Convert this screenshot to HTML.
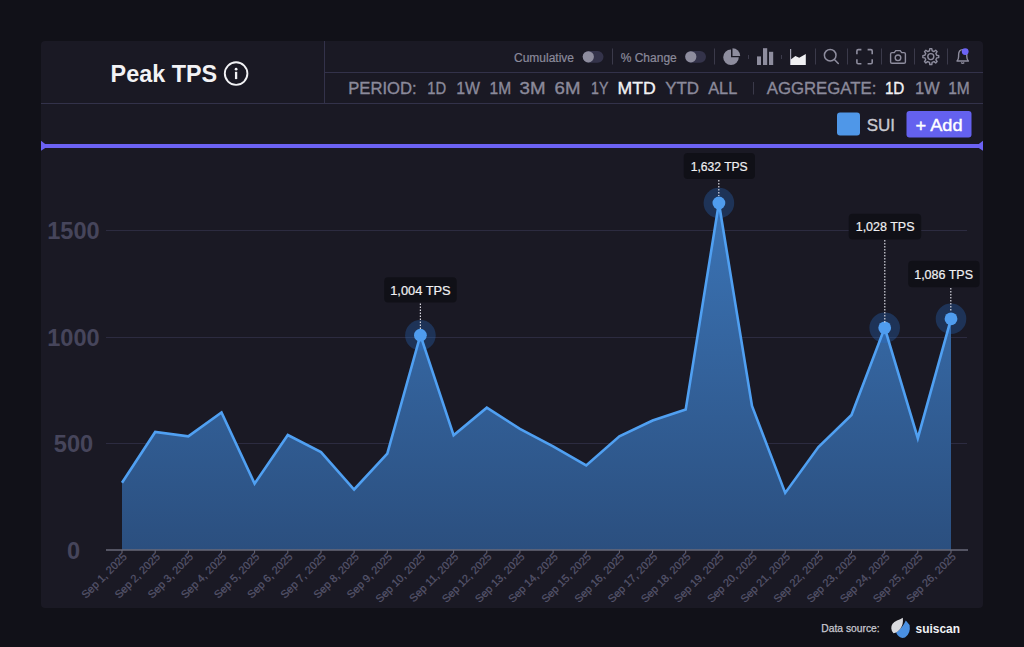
<!DOCTYPE html>
<html><head><meta charset="utf-8">
<style>
html,body{margin:0;padding:0;background:#111118;width:1024px;height:647px;overflow:hidden}
svg{display:block;font-family:"Liberation Sans",sans-serif}
</style></head>
<body>
<svg width="1024" height="647" viewBox="0 0 1024 647">
<defs>
<linearGradient id="fillg" x1="0" y1="200" x2="0" y2="550" gradientUnits="userSpaceOnUse">
<stop offset="0" stop-color="#3b74b6"/>
<stop offset="1" stop-color="#2b4f7f"/>
</linearGradient>
</defs>
<rect width="1024" height="647" fill="#111118"/>
<!-- card -->
<rect x="41" y="41" width="942" height="567" rx="4" fill="#1a1924"/>
<!-- header lines -->
<line x1="324.5" y1="41" x2="324.5" y2="103" stroke="#33324a" stroke-width="1"/>
<line x1="325" y1="72.5" x2="983" y2="72.5" stroke="#33324a" stroke-width="1"/>
<line x1="41" y1="103.5" x2="983" y2="103.5" stroke="#33324a" stroke-width="1"/>
<!-- title -->
<text x="110.6" y="81.6" font-size="23.4" font-weight="bold" fill="#f2f2f5">Peak TPS</text>
<circle cx="236.1" cy="73.6" r="11.3" fill="none" stroke="#f2f2f5" stroke-width="1.9"/>
<circle cx="236.1" cy="69.2" r="1.4" fill="#f2f2f5"/>
<line x1="236.1" y1="71.8" x2="236.1" y2="79.1" stroke="#f2f2f5" stroke-width="2.3"/>
<!-- toolbar row 1 -->
<g fill="#8b8a9b" stroke="#8b8a9b" stroke-width="0.2" font-size="12">
<text x="514" y="61.5">Cumulative</text>
<text x="620.7" y="61.5">% Change</text>
</g>
<rect x="582.7" y="51" width="20.8" height="11.7" rx="5.85" fill="#34334a"/>
<circle cx="588.3" cy="56.8" r="5.6" fill="#8e8d9e"/>
<rect x="685.2" y="51" width="20.8" height="11.7" rx="5.85" fill="#34334a"/>
<circle cx="690.8" cy="56.8" r="5.6" fill="#8e8d9e"/>
<g stroke="#3b3a4a" stroke-width="1">
<line x1="612.5" y1="48.5" x2="612.5" y2="64.5"/>
<line x1="714.5" y1="48.5" x2="714.5" y2="64.5"/>
<line x1="748.5" y1="55" x2="748.5" y2="59"/>
<line x1="781.5" y1="55" x2="781.5" y2="59"/>
<line x1="815.5" y1="48.5" x2="815.5" y2="64.5"/>
<line x1="847.5" y1="48.5" x2="847.5" y2="64.5"/>
<line x1="881.5" y1="48.5" x2="881.5" y2="64.5"/>
<line x1="914.5" y1="48.5" x2="914.5" y2="64.5"/>
<line x1="947.5" y1="48.5" x2="947.5" y2="64.5"/>
</g>
<!-- pie -->
<path d="M731,49.5 A7.8,7.8 0 1 0 738.8,57.3 L731,57.3 Z" fill="#8e8d9e"/>
<path d="M732.5,48.2 A7.8,7.8 0 0 1 740.2,55.9 L732.5,55.9 Z" fill="#8e8d9e"/>
<!-- bars -->
<g fill="#8e8d9e">
<rect x="757" y="56.4" width="4" height="8.6"/>
<rect x="763" y="48.2" width="4.2" height="16.8"/>
<rect x="769" y="51.8" width="4.2" height="13.2"/>
</g>
<!-- area icon -->
<line x1="790.6" y1="49" x2="790.6" y2="65" stroke="#a09fb0" stroke-width="1.2"/>
<path d="M790.8,65 V59.5 L795.4,56 L799.2,57.8 L805.8,54 V65 Z" fill="#f0f0f3"/>
<!-- search -->
<circle cx="830.2" cy="55.2" r="5.8" fill="none" stroke="#8e8d9e" stroke-width="1.5"/>
<line x1="834.4" y1="59.4" x2="838.3" y2="63.5" stroke="#8e8d9e" stroke-width="1.5" stroke-linecap="round"/>
<!-- fullscreen -->
<g fill="none" stroke="#8e8d9e" stroke-width="1.6">
<path d="M856.9,54.3 V50.9 Q856.9,49.6 858.2,49.6 H861.4"/>
<path d="M867.6,49.6 H870.9 Q872.2,49.6 872.2,50.9 V54.3"/>
<path d="M856.9,59.2 V62.5 Q856.9,63.8 858.2,63.8 H861.4"/>
<path d="M867.6,63.8 H870.9 Q872.2,63.8 872.2,62.5 V59.2"/>
</g>
<!-- camera -->
<g fill="none" stroke="#8e8d9e" stroke-width="1.4">
<path d="M890.6,54 Q890.6,52.6 892,52.6 H894.3 L895.8,50.6 H900.2 L901.7,52.6 H904 Q905.4,52.6 905.4,54 V62 Q905.4,63.3 904,63.3 H892 Q890.6,63.3 890.6,62 Z"/>
<circle cx="898" cy="57.8" r="2.8"/>
</g>
<!-- gear -->
<g fill="none" stroke="#8e8d9e" stroke-width="1.4">
<circle cx="930.8" cy="56.6" r="3"/>
<path d="M929.49,50.74 L929.80,48.66 L931.80,48.66 L932.11,50.74 L934.01,51.53 L935.70,50.28 L937.12,51.70 L935.87,53.39 L936.66,55.29 L938.74,55.60 L938.74,57.60 L936.66,57.91 L935.87,59.81 L937.12,61.50 L935.70,62.92 L934.01,61.67 L932.11,62.46 L931.80,64.54 L929.80,64.54 L929.49,62.46 L927.59,61.67 L925.90,62.92 L924.48,61.50 L925.73,59.81 L924.94,57.91 L922.86,57.60 L922.86,55.60 L924.94,55.29 L925.73,53.39 L924.48,51.70 L925.90,50.28 L927.59,51.53 Z" stroke-linejoin="round"/>
</g>
<!-- bell -->
<g fill="none" stroke="#8e8d9e" stroke-width="1.4">
<path d="M957,61 Q958.6,59.6 958.6,56.5 V55 Q958.6,49.6 962.7,49.6 Q966.8,49.6 966.8,55 V56.5 Q966.8,59.6 968.4,61 Z" stroke-linejoin="round"/>
<path d="M961.2,62.5 Q962.7,64.2 964.2,62.5"/>
</g>
<circle cx="965.2" cy="51.6" r="3.4" fill="#6c63f5"/>
<!-- period row -->
<g fill="#8b8a9b" stroke="#8b8a9b" stroke-width="0.35" font-size="17">
<text x="348.2" y="94.4" textLength="68.5" lengthAdjust="spacingAndGlyphs">PERIOD:</text>
<text x="427.2" y="94.4" textLength="18.9" lengthAdjust="spacingAndGlyphs">1D</text>
<text x="456.2" y="94.4" textLength="23.8" lengthAdjust="spacingAndGlyphs">1W</text>
<text x="489.59999999999997" y="94.4" textLength="21.599999999999998" lengthAdjust="spacingAndGlyphs">1M</text>
<text x="519.6" y="94.4" textLength="26.0" lengthAdjust="spacingAndGlyphs">3M</text>
<text x="554.6" y="94.4" textLength="25.9" lengthAdjust="spacingAndGlyphs">6M</text>
<text x="591.1" y="94.4" textLength="17.3" lengthAdjust="spacingAndGlyphs">1Y</text>
<text x="617.5" y="94.4" textLength="38.2" lengthAdjust="spacingAndGlyphs" fill="#f2f2f5" stroke="#f2f2f5">MTD</text>
<text x="665.2" y="94.4" textLength="33.900000000000006" lengthAdjust="spacingAndGlyphs">YTD</text>
<text x="708.2" y="94.4" textLength="29.099999999999998" lengthAdjust="spacingAndGlyphs">ALL</text>
<text x="766.7" y="94.4" textLength="109.7" lengthAdjust="spacingAndGlyphs">AGGREGATE:</text>
<text x="884.9000000000001" y="94.4" textLength="19.5" lengthAdjust="spacingAndGlyphs" fill="#f2f2f5" stroke="#f2f2f5">1D</text>
<text x="914.9000000000001" y="94.4" textLength="24.9" lengthAdjust="spacingAndGlyphs">1W</text>
<text x="948.2" y="94.4" textLength="21.599999999999998" lengthAdjust="spacingAndGlyphs">1M</text>
</g>
<line x1="753.5" y1="82" x2="753.5" y2="94.5" stroke="#3b3a4a" stroke-width="1"/>
<!-- legend -->
<rect x="837" y="112.5" width="23" height="23" rx="3" fill="#4f97e8"/>
<text x="866.7" y="130.8" font-size="17" fill="#c9c9d1" stroke="#c9c9d1" stroke-width="0.35">SUI</text>
<rect x="906.5" y="111" width="65" height="26.5" rx="3" fill="#6461ef"/>
<text x="915.5" y="130.8" font-size="17" fill="#ffffff" stroke="#ffffff" stroke-width="0.4" textLength="47" lengthAdjust="spacingAndGlyphs">+ Add</text>
<!-- range slider line -->
<rect x="41" y="144" width="942" height="4" fill="#6c62f4"/>
<path d="M41,140.8 L45.2,144 V148 L41,150.8 Z" fill="#6c62f4"/>
<path d="M983,140.8 L978.8,144 V148 L983,150.8 Z" fill="#6c62f4"/>
<!-- grid -->
<g stroke="#2c2b40" stroke-width="1">
<line x1="106" y1="230.5" x2="967" y2="230.5"/>
<line x1="106" y1="337.5" x2="967" y2="337.5"/>
<line x1="106" y1="443.5" x2="967" y2="443.5"/>
</g>
<!-- y labels -->
<g fill="#46455b" font-size="23.6" font-weight="bold" text-anchor="middle">
<text x="73.5" y="239.4">1500</text>
<text x="73.5" y="345.9">1000</text>
<text x="73.5" y="452.3">500</text>
<text x="73.5" y="558.8">0</text>
</g>
<!-- area -->
<path d="M122.0,482.8 L155.2,432.0 L188.3,436.3 L221.5,412.5 L254.6,483.6 L287.8,435.0 L321.0,452.1 L354.1,489.5 L387.3,453.6 L420.4,335.2 L453.6,435.2 L486.8,407.7 L519.9,428.8 L553.1,446.4 L586.2,465.4 L619.4,436.3 L652.6,420.5 L685.7,409.5 L718.9,203.0 L752.0,406.0 L785.2,492.9 L818.4,447.0 L851.5,415.0 L884.7,327.8 L917.8,438.2 L951.0,318.8 L951,550 L122,550 Z" fill="url(#fillg)"/>
<!-- markers -->
<g>
<circle cx="420.4" cy="335.2" r="15.3" fill="#2771ce" fill-opacity="0.3"/>
<circle cx="718.9" cy="203" r="15.3" fill="#2771ce" fill-opacity="0.3"/>
<circle cx="884.7" cy="327.8" r="15.3" fill="#2771ce" fill-opacity="0.3"/>
<circle cx="951" cy="318.8" r="15.3" fill="#2771ce" fill-opacity="0.3"/>
</g>
<path d="M122.0,482.8 L155.2,432.0 L188.3,436.3 L221.5,412.5 L254.6,483.6 L287.8,435.0 L321.0,452.1 L354.1,489.5 L387.3,453.6 L420.4,335.2 L453.6,435.2 L486.8,407.7 L519.9,428.8 L553.1,446.4 L586.2,465.4 L619.4,436.3 L652.6,420.5 L685.7,409.5 L718.9,203.0 L752.0,406.0 L785.2,492.9 L818.4,447.0 L851.5,415.0 L884.7,327.8 L917.8,438.2 L951.0,318.8" fill="none" stroke="#50a0f2" stroke-width="2.6" stroke-linejoin="miter"/>
<g fill="#4f9cee">
<circle cx="420.4" cy="335.2" r="6.4"/>
<circle cx="718.9" cy="203" r="6.4"/>
<circle cx="884.7" cy="327.8" r="6.4"/>
<circle cx="951" cy="318.8" r="6.4"/>
</g>
<!-- axis -->
<line x1="106" y1="550" x2="968" y2="550" stroke="#696879" stroke-width="1.4"/>
<path d="M122.0,550 v3 M155.2,550 v3 M188.3,550 v3 M221.5,550 v3 M254.6,550 v3 M287.8,550 v3 M321.0,550 v3 M354.1,550 v3 M387.3,550 v3 M420.4,550 v3 M453.6,550 v3 M486.8,550 v3 M519.9,550 v3 M553.1,550 v3 M586.2,550 v3 M619.4,550 v3 M652.6,550 v3 M685.7,550 v3 M718.9,550 v3 M752.0,550 v3 M785.2,550 v3 M818.4,550 v3 M851.5,550 v3 M884.7,550 v3 M917.8,550 v3 M951.0,550 v3" stroke="#696879" stroke-width="1"/>
<!-- x labels -->
<g fill="#55546b" stroke="#55546b" stroke-width="0.25" font-size="10.9">
<text transform="translate(127.5,557.5) rotate(-45)" text-anchor="end">Sep 1, 2025</text>
<text transform="translate(160.7,557.5) rotate(-45)" text-anchor="end">Sep 2, 2025</text>
<text transform="translate(193.8,557.5) rotate(-45)" text-anchor="end">Sep 3, 2025</text>
<text transform="translate(227.0,557.5) rotate(-45)" text-anchor="end">Sep 4, 2025</text>
<text transform="translate(260.1,557.5) rotate(-45)" text-anchor="end">Sep 5, 2025</text>
<text transform="translate(293.3,557.5) rotate(-45)" text-anchor="end">Sep 6, 2025</text>
<text transform="translate(326.5,557.5) rotate(-45)" text-anchor="end">Sep 7, 2025</text>
<text transform="translate(359.6,557.5) rotate(-45)" text-anchor="end">Sep 8, 2025</text>
<text transform="translate(392.8,557.5) rotate(-45)" text-anchor="end">Sep 9, 2025</text>
<text transform="translate(425.9,557.5) rotate(-45)" text-anchor="end">Sep 10, 2025</text>
<text transform="translate(459.1,557.5) rotate(-45)" text-anchor="end">Sep 11, 2025</text>
<text transform="translate(492.3,557.5) rotate(-45)" text-anchor="end">Sep 12, 2025</text>
<text transform="translate(525.4,557.5) rotate(-45)" text-anchor="end">Sep 13, 2025</text>
<text transform="translate(558.6,557.5) rotate(-45)" text-anchor="end">Sep 14, 2025</text>
<text transform="translate(591.7,557.5) rotate(-45)" text-anchor="end">Sep 15, 2025</text>
<text transform="translate(624.9,557.5) rotate(-45)" text-anchor="end">Sep 16, 2025</text>
<text transform="translate(658.1,557.5) rotate(-45)" text-anchor="end">Sep 17, 2025</text>
<text transform="translate(691.2,557.5) rotate(-45)" text-anchor="end">Sep 18, 2025</text>
<text transform="translate(724.4,557.5) rotate(-45)" text-anchor="end">Sep 19, 2025</text>
<text transform="translate(757.5,557.5) rotate(-45)" text-anchor="end">Sep 20, 2025</text>
<text transform="translate(790.7,557.5) rotate(-45)" text-anchor="end">Sep 21, 2025</text>
<text transform="translate(823.9,557.5) rotate(-45)" text-anchor="end">Sep 22, 2025</text>
<text transform="translate(857.0,557.5) rotate(-45)" text-anchor="end">Sep 23, 2025</text>
<text transform="translate(890.2,557.5) rotate(-45)" text-anchor="end">Sep 24, 2025</text>
<text transform="translate(923.3,557.5) rotate(-45)" text-anchor="end">Sep 25, 2025</text>
<text transform="translate(956.5,557.5) rotate(-45)" text-anchor="end">Sep 26, 2025</text>
</g>
<!-- tooltip connectors -->
<g stroke="#d8d8e0" stroke-width="1.2" stroke-dasharray="1.5 1.5">
<line x1="420.4" y1="303.5" x2="420.4" y2="329"/>
<line x1="718.8" y1="180" x2="718.8" y2="196"/>
<line x1="884.8" y1="240" x2="884.8" y2="324"/>
<line x1="950.8" y1="288" x2="950.8" y2="312"/>
</g>
<!-- tooltips -->
<g fill="#101017">
<rect x="384.2" y="277.2" width="72.5" height="25.4" rx="4"/>
<rect x="683.7" y="153" width="71.3" height="26" rx="4"/>
<rect x="848.7" y="213.7" width="72.5" height="25.9" rx="4"/>
<rect x="908.2" y="260.8" width="71.4" height="26.4" rx="4"/>
</g>
<g fill="#f0f0f3" stroke="#f0f0f3" stroke-width="0.2" font-size="12.6">
<text x="390.2" y="295" textLength="60.5" lengthAdjust="spacingAndGlyphs">1,004 TPS</text>
<text x="690.7" y="170.6" textLength="57" lengthAdjust="spacingAndGlyphs">1,632 TPS</text>
<text x="855.7" y="231.3" textLength="58.8" lengthAdjust="spacingAndGlyphs">1,028 TPS</text>
<text x="914.2" y="278.8" textLength="58.8" lengthAdjust="spacingAndGlyphs">1,086 TPS</text>
</g>
<!-- footer -->
<text x="821.3" y="632" font-size="10.3" fill="#c8c8d0" stroke="#c8c8d0" stroke-width="0.25">Data source:</text>
<g>
<path d="M896,632.5 Q902.5,628 905.8,620.5 L909.6,625 Q911,633.5 905,637.5 Q899.5,639.5 896,632.5 Z" fill="#4a90e2"/>
<path d="M891.3,628.5 Q891,623 897,620.5 Q900.5,619.2 902.8,617.8 Q903.6,624.5 900.5,628.5 Q897.5,632.5 893.5,633.2 Q891.5,631.5 891.3,628.5 Z" fill="#d9dade"/>
</g>
<text x="915.5" y="632.7" font-size="13.5" textLength="44.5" lengthAdjust="spacingAndGlyphs" font-weight="bold" fill="#f2f2f5">suiscan</text>
</svg>
</body></html>
